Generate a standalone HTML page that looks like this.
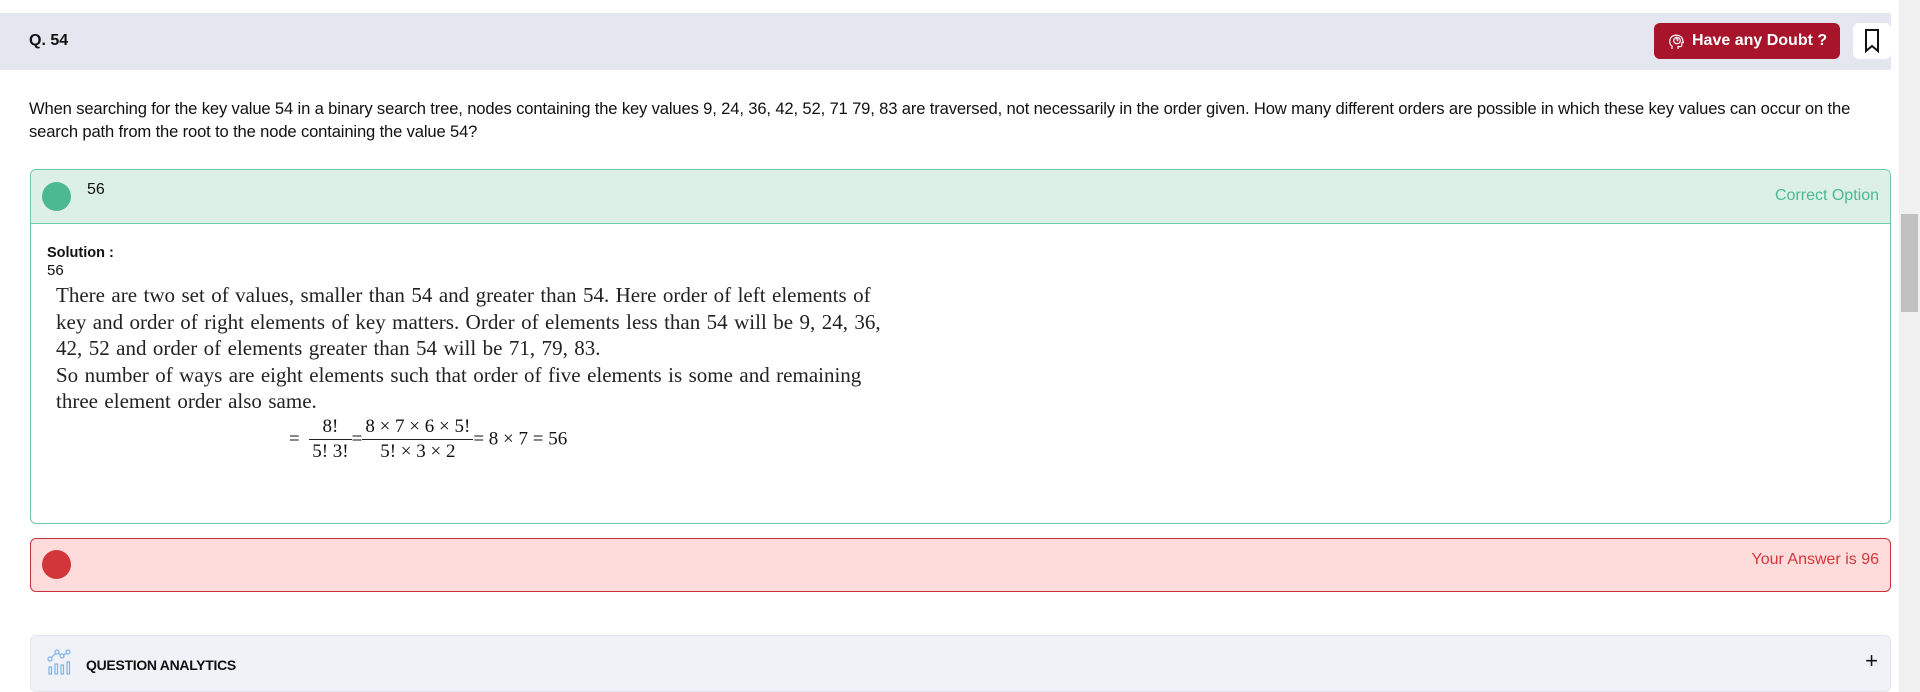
<!DOCTYPE html>
<html><head><meta charset="utf-8"><style>
*{margin:0;padding:0;box-sizing:border-box}
body{width:1920px;height:692px;overflow:hidden;background:#fff;font-family:"Liberation Sans",sans-serif;position:relative;color:#111}
.abs{position:absolute}
.hdr{left:0;top:13px;width:1891px;height:57px;background:#e4e7ef}
.q{left:29px;top:32px;font-size:16px;font-weight:bold}
.btn{left:1654px;top:23px;width:186px;height:36px;background:#a8142a;border-radius:6px;color:#fff;font-weight:bold;font-size:16px;line-height:36px;padding-left:38px}
.bm{left:1853px;top:23px;width:38px;height:36px;background:#fff;border-radius:6px}
.qt{left:29px;top:97px;width:1862px;font-size:16.6px;line-height:23px;letter-spacing:-0.15px}
.green{left:30px;top:169px;width:1861px;height:355px;border:1.5px solid #6ccaa5;border-radius:6px;overflow:hidden}
.gh{height:54px;background:#dcf0e8;border-bottom:1.5px solid #6ccaa5;position:relative}
.circ{position:absolute;width:29px;height:29px;border-radius:50%}
.red{left:30px;top:538px;width:1861px;height:54px;border:1.5px solid #c8303e;border-radius:6px;background:#ffdcdc}
.serif{font-family:"Liberation Serif",serif;font-size:21px;word-spacing:1.2px;line-height:26.5px;color:#222;white-space:nowrap}
.an{left:30px;top:635px;width:1861px;height:57px;background:#f1f2f8;border:1px solid #e3e5ee;border-radius:6px}
.sb{left:1899px;top:0;width:21px;height:692px;background:#f0f0f0}
.thumb{left:1901px;top:214px;width:17px;height:98px;background:#c1c1c1}
.fr{display:inline-block;vertical-align:middle;text-align:center;font-family:"Liberation Serif",serif;font-size:19px;line-height:24px}
.fr span{display:block;padding:0 3px}
.fr .n{border-bottom:1.3px solid #222}
</style></head><body>
<div class="abs hdr"></div>
<div class="abs q">Q. 54</div>
<div class="abs btn">Have any Doubt ?
<svg class="abs" style="left:13px;top:10px" width="18" height="18" viewBox="0 0 18 18" fill="none" stroke="#fff" stroke-width="1.2"><path d="M5 16v-3C2 11 2 6 5 3.5 8 1 14 2 15.5 6l.8 3.5-1.5.3v2.5c0 1-1 1.5-2 1.3L11 13.5V16"/><circle cx="10" cy="7.5" r="3.3"/><path d="M9 6.5a1 1 0 1 1 1.3 1l-.3.6M10 9.6v.2"/></svg></div>
<div class="abs bm"><svg class="abs" style="left:11px;top:6px" width="16" height="24" viewBox="0 0 16 24" fill="none" stroke="#111" stroke-width="2"><path d="M2 1h12v21l-6-5-6 5z"/></svg></div>
<div class="abs qt">When searching for the key value 54 in a binary search tree, nodes containing the key values 9, 24, 36, 42, 52, 71 79, 83 are traversed, not necessarily in the order given. How many different orders are possible in which these key values can occur on the<br>search path from the root to the node containing the value 54?</div>

<div class="abs green">
 <div class="gh">
  <div class="circ" style="left:11px;top:12px;background:#4db991"></div>
  <div class="abs" style="left:56px;top:11px;font-size:16px">56</div>
  <div class="abs" style="right:11px;top:17px;font-size:16px;color:#4db991">Correct Option</div>
 </div>
 <div class="abs" style="left:16px;top:74px;font-size:15px;line-height:17px"><b style="font-size:14.5px">Solution :</b><br>56</div>
 <div class="abs serif" style="left:25px;top:112px">There are two set of values, smaller than 54 and greater than 54. Here order of left elements of<br>key and order of right elements of key matters. Order of elements less than 54 will be 9, 24, 36,<br>42, 52 and order of elements greater than 54 will be 71, 79, 83.<br>So number of ways are eight elements such that order of five elements is some and remaining<br>three element order also same.</div>
 <div class="abs" style="left:258px;top:245px;font-family:'Liberation Serif',serif;font-size:19px;white-space:nowrap">
  <span style="vertical-align:middle">=&nbsp;&nbsp;</span><span class="fr"><span class="n">8!</span><span>5! 3!</span></span><span style="vertical-align:middle">=</span><span class="fr"><span class="n">8 × 7 × 6 × 5!</span><span>5! × 3 × 2</span></span><span style="vertical-align:middle">= 8 × 7 = 56</span>
 </div>
</div>

<div class="abs red">
 <div class="circ" style="left:11px;top:11px;background:#d3363a"></div>
 <div class="abs" style="right:11px;top:12px;font-size:16px;color:#d3363a">Your Answer is 96</div>
</div>

<div class="abs an">
 <svg class="abs" style="left:16px;top:12px" width="25" height="28" viewBox="0 0 25 28" fill="none" stroke="#7fb2ef" stroke-width="1.2"><circle cx="3" cy="11" r="2"/><circle cx="10" cy="4" r="2"/><circle cx="15" cy="8" r="2"/><circle cx="21" cy="4" r="2"/><path d="M4.5 9.5l4-4M11.5 5l2 2M16.5 7l3-2"/><rect x="2" y="19" width="2.5" height="7"/><rect x="8" y="16" width="2.5" height="10"/><rect x="14" y="17" width="2.5" height="9"/><rect x="20" y="14" width="2.5" height="12"/></svg>
 <div class="abs" style="left:55px;top:21px;font-size:14px;font-weight:bold;letter-spacing:-0.3px">QUESTION ANALYTICS</div>
 <div class="abs" style="right:12px;top:12px;font-size:22px;font-weight:300">+</div>
</div>
<div class="abs sb"></div><div class="abs thumb"></div>
</body></html>
